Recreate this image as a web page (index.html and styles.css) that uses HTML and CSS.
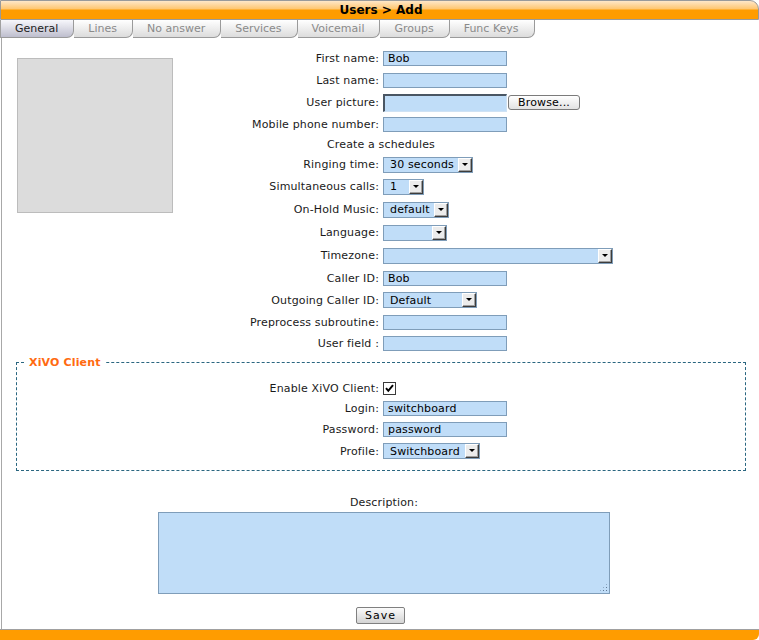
FILE: index.html
```html
<!DOCTYPE html>
<html lang="en">
<head>
<meta charset="utf-8">
<title>Users &gt; Add</title>
<link rel="stylesheet" href="styles.css">
</head>
<body>
<div class="page">
  <header class="titlebar"><h1>Users &gt; Add</h1></header>
  <nav class="tabs">
    <span class="tab active">General</span>
    <span class="tab">Lines</span>
    <span class="tab">No answer</span>
    <span class="tab">Services</span>
    <span class="tab">Voicemail</span>
    <span class="tab">Groups</span>
    <span class="tab">Func Keys</span>
  </nav>
  <main class="content">
    <section class="general">
      <div class="picture"></div>
      <div class="form">
        <label class="label">First name:</label>
        <input class="text" type="text" value="Bob">
        <label class="label">Last name:</label>
        <input class="text" type="text" value="">
        <label class="label">User picture:</label>
        <div class="file"><input class="filebox" type="text" value=""><button class="browse" type="button">Browse...</button></div>
        <label class="label">Mobile phone number:</label>
        <input class="text" type="text" value="">
        <div class="span-all">Create a schedules</div>
        <label class="label">Ringing time:</label>
        <span class="select w-ring"><select><option>30 seconds</option></select><span class="arrow"></span></span>
        <label class="label">Simultaneous calls:</label>
        <span class="select w-sim"><select><option>1</option></select><span class="arrow"></span></span>
        <label class="label">On-Hold Music:</label>
        <span class="select w-moh"><select><option>default</option></select><span class="arrow"></span></span>
        <label class="label">Language:</label>
        <span class="select w-lang"><select><option></option></select><span class="arrow"></span></span>
        <label class="label">Timezone:</label>
        <span class="select w-tz"><select><option></option></select><span class="arrow"></span></span>
        <label class="label">Caller ID:</label>
        <input class="text" type="text" value="Bob">
        <label class="label">Outgoing Caller ID:</label>
        <span class="select w-out"><select><option>Default</option></select><span class="arrow"></span></span>
        <label class="label">Preprocess subroutine:</label>
        <input class="text" type="text" value="">
        <label class="label">User field :</label>
        <input class="text" type="text" value="">
      </div>
    </section>

    <fieldset class="client">
      <legend>XiVO Client</legend>
      <div class="client-grid">
        <label class="label">Enable XiVO Client:</label>
        <span class="check"><svg width="11" height="11" viewBox="0 0 11 11"><path d="M2 5.2 L4.3 7.8 L9 2.2" fill="none" stroke="#000" stroke-width="2"/></svg></span>
        <label class="label">Login:</label>
        <input class="text" type="text" value="switchboard">
        <label class="label">Password:</label>
        <input class="text" type="text" value="password">
        <label class="label">Profile:</label>
        <span class="select w-prof"><select><option>Switchboard</option></select><span class="arrow"></span></span>
      </div>
    </fieldset>

    <div class="desc">
      <div class="desc-label">Description:</div>
      <div class="area"><textarea></textarea></div>
    </div>

    <div class="actions"><button class="save" type="button">Save</button></div>
  </main>
  <footer class="bottombar"></footer>
</div>
</body>
</html>
```
FILE: styles.css
```css
html, body {
  margin: 0;
  padding: 0;
}
html {
  overflow: hidden;
}
body {
  font-family: "DejaVu Sans", Verdana, sans-serif;
  font-size: 11px;
  line-height: 13px;
  letter-spacing: 0.15px;
  color: #1a1a1a;
  background: #fff;
}

.page {
  display: flex;
  flex-direction: column;
  width: 759px;
  height: 640px;
}

/* title bar */
.titlebar {
  flex: none;
  height: 18px;
  border: 1px solid #9a9a9a;
  border-top-right-radius: 9px;
  background: linear-gradient(#ffe7c8 0, #ffc670 8px, #ff9c00 9px, #ff9c00 100%);
}
.titlebar h1 {
  margin: 0;
  font-size: 12px;
  line-height: 18px;
  font-weight: bold;
  letter-spacing: 0;
  text-align: center;
  color: #000;
  padding-left: 3px;
}

/* tabs */
.tabs {
  flex: none;
  display: flex;
  height: 18px;
  border-left: 1px solid #a0a0a0;
}
.tab {
  height: 17px;
  line-height: 17px;
  padding: 0 15px 0 14px;
  border-bottom: 1px solid #9a9a9a;
  border-right: 1px solid #9a9a9a;
  border-bottom-right-radius: 7px;
  background: linear-gradient(#ffffff, #dcdcdc);
  color: #8a8a8a;
  letter-spacing: 0;
  white-space: nowrap;
}
.tab.active {
  background: linear-gradient(#f7f7fb, #bebece);
  color: #222;
}

/* content */
.content {
  flex: 1;
  margin-left: 1px;
  border-left: 1px solid #a8a8a8;
}

.general {
  display: flex;
  padding-top: 10px;
}
.picture {
  flex: none;
  width: 154px;
  height: 153px;
  margin: 10px 0 0 15px;
  border: 1px solid #bcbcbc;
  background: #dcdcdc;
}
.form {
  display: grid;
  grid-template-columns: 206px 206px;
  column-gap: 4px;
  grid-template-rows: 21px 22px 23px 21px 19px 21px 23px 23px 23px 23px 22px 22px 22px 21px;
  align-items: center;
}
.label {
  text-align: right;
  white-space: nowrap;
}
.span-all {
  grid-column: 1 / -1;
  text-align: center;
}

/* controls */
.text {
  width: 124px;
  height: 15px;
  box-sizing: border-box;
  margin: 0;
  padding: 0 4px;
  border: 1px solid #7f9db9;
  background: #c0ddf8;
  font: inherit;
  letter-spacing: inherit;
  color: #000;
  outline: none;
}
.file {
  display: flex;
  align-items: center;
  gap: 1px;
}
.filebox {
  width: 124px;
  height: 18px;
  box-sizing: border-box;
  margin: 0;
  padding: 0 3px;
  border-style: solid;
  border-width: 2px 1px 1px 2px;
  border-color: #4a5663 #cfe2f4 #cfe2f4 #4a5663;
  background: #c0ddf8;
  font: inherit;
}
.browse {
  width: 72px;
  height: 15px;
  box-sizing: border-box;
  margin: 0;
  padding: 0;
  border: 1px solid #7b7b7b;
  border-radius: 3px;
  background: linear-gradient(#ffffff, #e2e2e2);
  font: inherit;
  letter-spacing: inherit;
  line-height: 12px;
  color: #000;
}

.select {
  position: relative;
  display: block;
  height: 16px;
}
.select select {
  -webkit-appearance: none;
  appearance: none;
  display: block;
  width: 100%;
  height: 16px;
  box-sizing: border-box;
  margin: 0;
  padding: 0 16px 0 6px;
  border: 1px solid #7f9db9;
  border-radius: 0;
  background: #c0ddf8;
  font: inherit;
  letter-spacing: inherit;
  color: #000;
  outline: none;
}
.arrow {
  position: absolute;
  top: 1px;
  right: 1px;
  width: 14px;
  height: 14px;
  box-sizing: border-box;
  border: 1px solid;
  border-color: #ffffff #3c3c3c #3c3c3c #ffffff;
  box-shadow: inset -1px -1px 0 #a0a0a0;
  background: #ececec;
  pointer-events: none;
}
.arrow::after {
  content: "";
  position: absolute;
  left: 3px;
  top: 4px;
  border-left: 3px solid transparent;
  border-right: 3px solid transparent;
  border-top: 3px solid #000;
}
.w-ring { width: 90px; }
.w-sim { width: 41px; }
.w-moh { width: 66px; }
.w-lang { width: 64px; }
.w-tz { width: 230px; }
.w-out { width: 94px; }
.w-prof { width: 97px; }

.check {
  display: block;
  width: 13px;
  height: 13px;
  box-sizing: border-box;
  border: 1px solid #3a3a3a;
  background: #fff;
}
.check svg {
  display: block;
}

/* XiVO client fieldset */
.client {
  margin: 2px 13px 0 14px;
  padding: 0 0 8px 8px;
  border: 1px dashed #2a6680;
  min-width: 0;
}
.client legend {
  padding: 0 4px;
  color: #ff6a10;
  font-weight: bold;
  line-height: 13px;
}
.client-grid {
  display: grid;
  grid-template-columns: 354px auto;
  column-gap: 4px;
  grid-template-rows: 20px 20px 22px 22px;
  align-items: center;
  padding-top: 9px;
}

/* description */
.desc {
  margin-top: 25px;
  padding-left: 7px;
  text-align: center;
}
.area {
  position: relative;
  width: 452px;
  height: 82px;
  margin: 3px auto 0;
}
.area textarea {
  display: block;
  width: 452px;
  height: 82px;
  box-sizing: border-box;
  margin: 0;
  border: 1px solid #7f9db9;
  background: #c0ddf8;
  resize: none;
  font: inherit;
  outline: none;
}
.area::after {
  content: "";
  position: absolute;
  right: 2px;
  bottom: 2px;
  width: 9px;
  height: 9px;
  background-image: radial-gradient(circle at 1.5px 1.5px, #5f7893 0.6px, transparent 0.8px);
  background-size: 3px 3px;
  clip-path: polygon(100% 0, 100% 100%, 0 100%);
}

.actions {
  margin-top: 13px;
  text-align: center;
}
.save {
  width: 49px;
  height: 17px;
  box-sizing: border-box;
  margin: 0;
  padding: 0;
  border: 1px solid #808080;
  border-radius: 2px;
  background: linear-gradient(#fbfbfb, #d4d4d4);
  font: inherit;
  letter-spacing: 1px;
  color: #000;
}

.bottombar {
  flex: none;
  height: 10px;
  border-top: 1px solid #a0a0a0;
  border-bottom-right-radius: 6px;
  background: #ff9c00;
}
```
